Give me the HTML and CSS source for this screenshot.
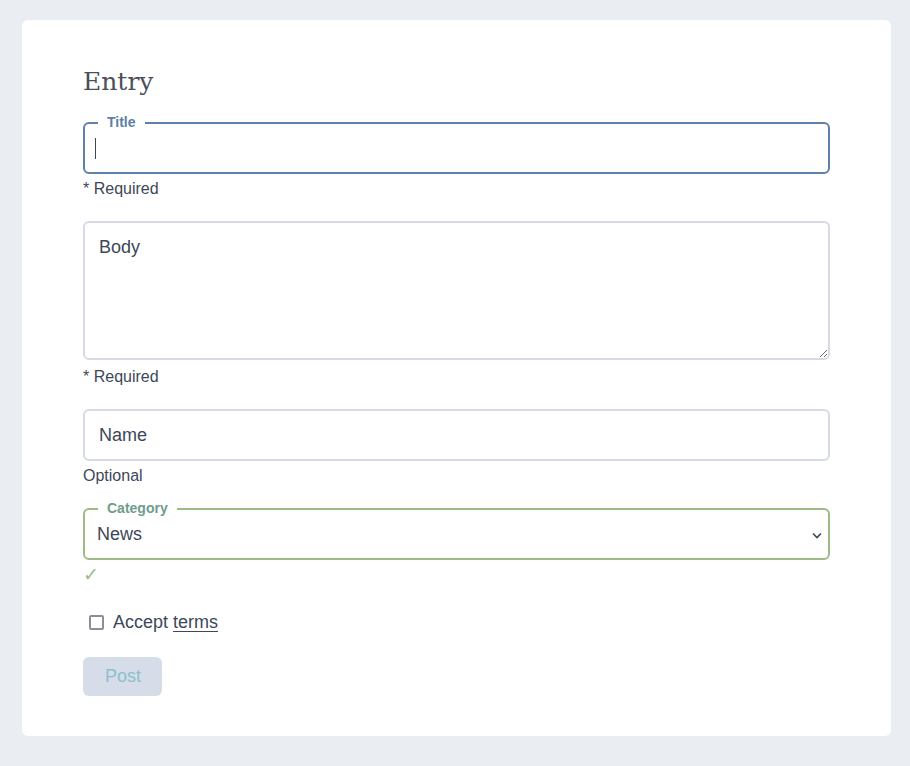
FILE: index.html
```html
<!DOCTYPE html>
<html>
<head>
<meta charset="utf-8">
<link rel="stylesheet" href="styles.css">
</head>
<body>
<main class="card">
  <h1 class="heading">Entry</h1>

  <div class="field">
    <div class="box box-focus">
      <span class="legend legend-blue">Title</span>
      <span class="caret"></span>
    </div>
    <div class="help">* Required</div>
  </div>

  <div class="field">
    <textarea class="box area" placeholder="Body"></textarea>
    <div class="help help-area">* Required</div>
  </div>

  <div class="field">
    <input class="box input" type="text" placeholder="Name">
    <div class="help">Optional</div>
  </div>

  <div class="field">
    <div class="box box-valid select">
      <span class="legend legend-green">Category</span>
      <span class="select-value">News</span>
      <svg class="chev" width="10" height="7" viewBox="0 0 10 7"><path d="M1 1.5 L5 5.5 L9 1.5" fill="none" stroke="#3d4759" stroke-width="1.6"/></svg>
    </div>
    <div class="check">✓</div>
  </div>

  <label class="terms">
    <span class="checkbox"></span>
    <span>Accept <span class="link">terms</span></span>
  </label>

  <div class="actions">
    <button class="btn" type="button">Post</button>
  </div>
</main>
</body>
</html>
```

FILE: styles.css
```css
html, body {
  margin: 0;
  padding: 0;
}
body {
  background: #eaeef3;
  padding: 20px 19px 30px 22px;
  font-family: "Liberation Sans", Arial, sans-serif;
  color: #3d4759;
}
.card {
  background: #ffffff;
  border-radius: 6px;
  padding: 48px 61px 40px 61px;
  display: flex;
  flex-direction: column;
}
.heading {
  margin: 0 0 26px 0;
  font-family: "DejaVu Serif", serif;
  font-weight: normal;
  font-size: 25px;
  line-height: 28px;
  color: #4a4f59;
}
.field {
  display: flex;
  flex-direction: column;
  margin-bottom: 13px;
}
.box {
  box-sizing: border-box;
  width: 100%;
  height: 52px;
  border: 2px solid #d5dae6;
  border-radius: 6px;
  background: #fff;
  position: relative;
  font-family: "Liberation Sans", Arial, sans-serif;
  font-size: 18px;
  color: #3d4759;
  margin: 0;
}
.box-focus {
  border-color: #5f80ab;
  display: flex;
  align-items: center;
  padding-left: 10px;
}
.caret {
  display: block;
  width: 1px;
  height: 21px;
  background: #3d4759;
  margin-top: 1px;
}
.legend {
  position: absolute;
  left: 13px;
  top: -11px;
  padding: 0 9px;
  background: #fff;
  font-size: 14px;
  font-weight: bold;
  line-height: 18px;
}
.legend-blue { color: #5d7fa5; }
.legend-green { color: #6f9c8c; }
.area {
  display: block;
  height: 139px;
  padding: 13px 14px;
  resize: vertical;
  outline: none;
  line-height: 22px;
}
.area::placeholder,
.input::placeholder {
  color: #3d4759;
  opacity: 1;
}
.input {
  display: block;
  padding: 0 14px;
  outline: none;
}
.select {
  border-color: #9dbb86;
  display: flex;
  align-items: center;
  justify-content: space-between;
  padding: 0 6px 0 12px;
}
.select-value {
  margin-top: 1px;
}
.chev {
  display: block;
  margin-top: 2px;
}
.help {
  margin-top: 5px;
  font-size: 16px;
  line-height: 20px;
  height: 20px;
  margin-bottom: 9px;
}
.help-area {
  margin-top: 7px;
  margin-bottom: 9px;
}
.check {
  margin-top: 4px;
  font-family: "DejaVu Sans", sans-serif;
  font-size: 19px;
  line-height: 20px;
  color: #9dbb86;
  margin-bottom: 13px;
}
.terms {
  display: flex;
  align-items: center;
  gap: 9px;
  padding-left: 6px;
  font-size: 18px;
  line-height: 24px;
  color: #3d4759;
}
.checkbox {
  display: block;
  box-sizing: border-box;
  width: 15px;
  height: 15px;
  border: 2px solid #8b8e99;
  border-radius: 2px;
}
.link {
  text-decoration: underline;
  text-underline-offset: 3px;
}
.actions {
  margin-top: 23px;
  display: flex;
}
.btn {
  height: 39px;
  padding: 0 21px 0 22px;
  border: none;
  border-radius: 6px;
  background: #d6dce8;
  color: #8cc0cf;
  font-family: "Liberation Sans", Arial, sans-serif;
  font-size: 18px;
}
```
